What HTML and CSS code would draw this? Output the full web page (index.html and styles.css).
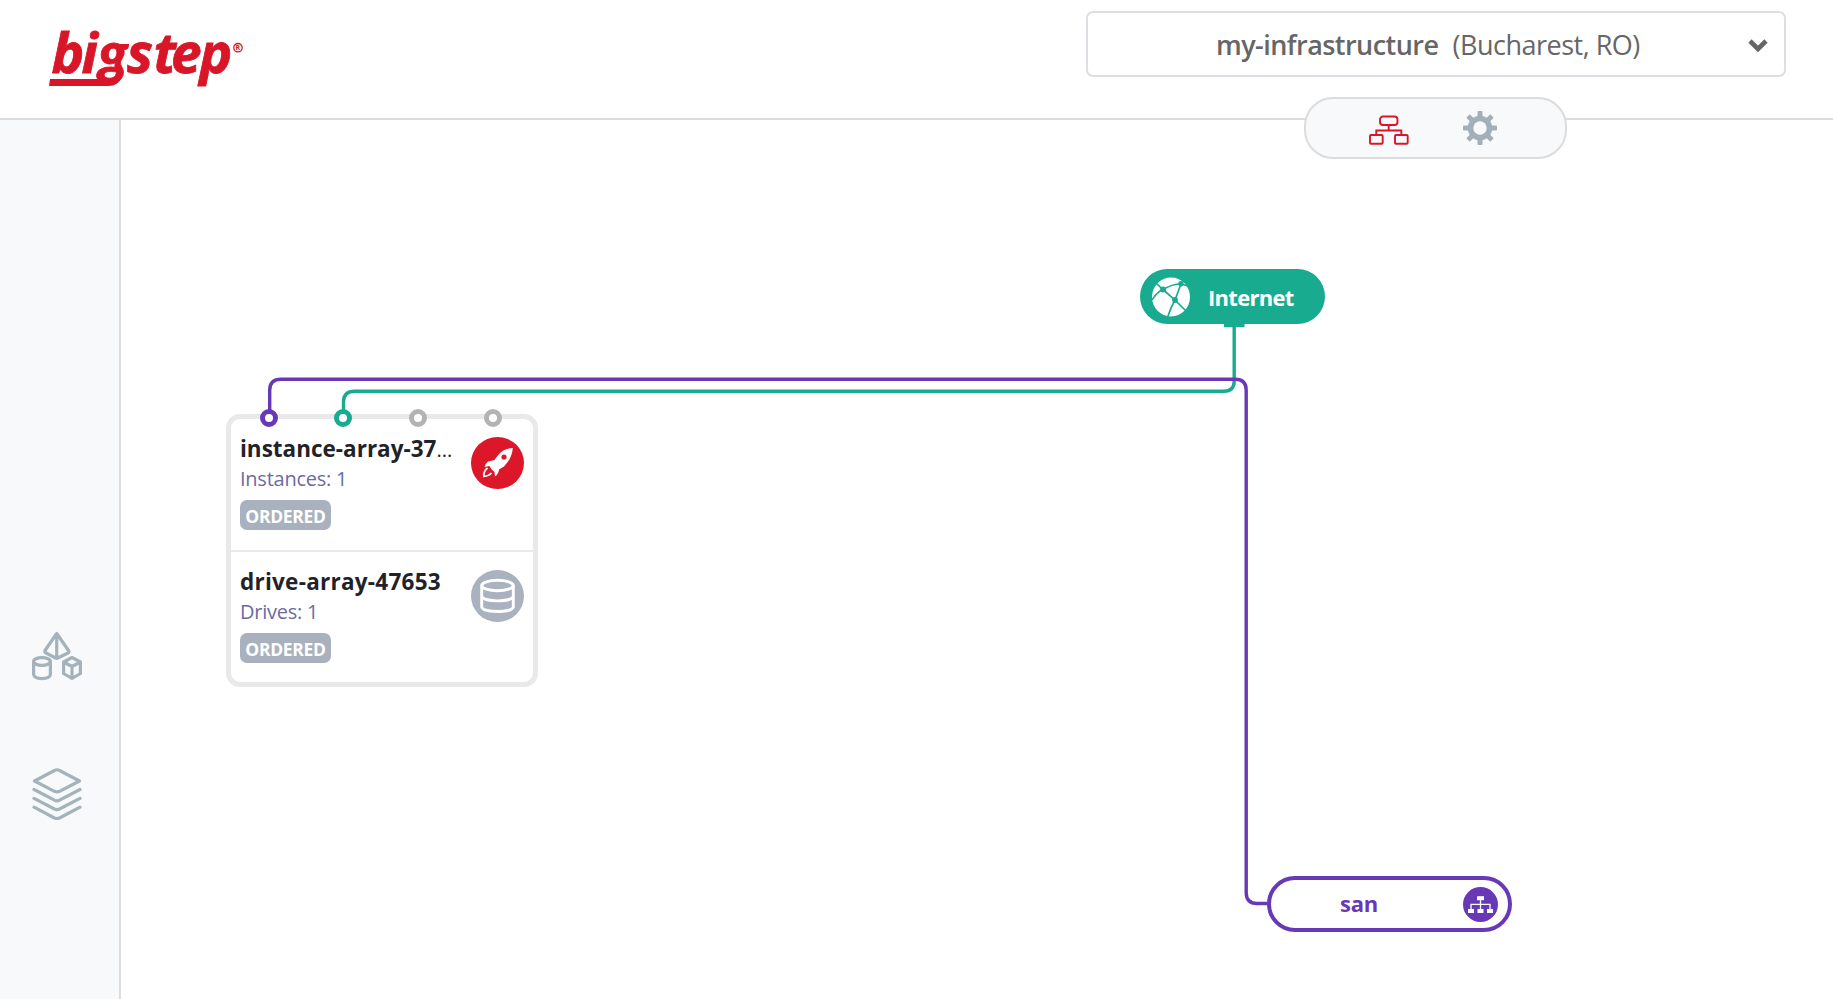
FILE: index.html
```html
<!DOCTYPE html>
<html lang="en">
<head>
<meta charset="utf-8">
<title>my-infrastructure</title>
<link rel="stylesheet" href="styles.css">
</head>
<body>
<div class="app">
  <header class="header">
    <svg class="logo" width="200" height="70" viewBox="0 0 200 70" role="img" aria-label="bigstep">
      <text class="logo-text" y="48" x="3.500 33.500 50.500 79 105.500 123 151.500">bi<tspan class="logo-g">g</tspan>step</text>
      <path d="M2 54H60Q67 54 69 48L75 47Q73 61 60 61H1Z" fill="#d91628"/>
      <circle cx="190" cy="22.700" r="4.200" fill="none" stroke="#d91628" stroke-width="1.300"/>
      <text class="logo-mark" x="187.600" y="25.300">R</text>
    </svg>
    <div class="select">
      <span class="select-name">my-infrastructure</span>
      <span class="select-place">(Bucharest, RO)</span>
      <svg class="chevron" width="20" height="14" viewBox="0 0 20 14"><path d="M2 3l8 8 8-8" fill="none" stroke="#666" stroke-width="4.600"/></svg>
    </div>
    <nav class="tabs">
      <svg width="40" height="30" viewBox="0 0 40 30" fill="none" stroke="#d91628" stroke-width="1.900">
        <rect x="11" y="1.500" width="17.500" height="8.500" rx="3"/>
        <rect x="1" y="20" width="12.700" height="8.700" rx="1"/>
        <rect x="26" y="20" width="12.700" height="8.700" rx="1"/>
        <path d="M19.700 10v5.500M7.300 20v-4.500h25V20"/>
      </svg>
      <svg class="gear" width="34" height="34" viewBox="-17 -17 34 34">
        <g fill="#a2b1b9">
          <rect x="-2.500" y="-17" width="5" height="34" rx=".8"/>
          <rect x="-2.500" y="-17" width="5" height="34" rx=".8" transform="rotate(45)"/>
          <rect x="-2.500" y="-17" width="5" height="34" rx=".8" transform="rotate(90)"/>
          <rect x="-2.500" y="-17" width="5" height="34" rx=".8" transform="rotate(135)"/>
          <circle r="12.300"/>
        </g>
        <circle r="6.700" fill="#f8f9fb"/>
      </svg>
    </nav>
  </header>
  <div class="body">
    <aside class="sidebar">
      <svg width="50" height="50" viewBox="0 0 50 50" fill="none" stroke="#a4b3bb" stroke-width="3.200" stroke-linejoin="round">
        <path d="M24.700 2.500L13 19.500Q12.500 21 14 22L24.700 27.500 36 22Q37.500 21 36.500 19.500ZM24.700 2.500V27.500"/>
        <ellipse cx="10" cy="30.500" rx="8.400" ry="3.900"/>
        <path d="M1.600 30.500V43.500C2.500 49 17.500 49 18.400 43.500V30.500"/>
        <path d="M40 26.500L48.400 31V42.500L40 47.500 31.600 42.500V31ZM31.600 31L40 35.500 48.400 31M40 35.500V47.500"/>
      </svg>
      <svg width="50" height="52" viewBox="0 0 50 52" fill="none" stroke="#a4b3bb" stroke-width="3.200" stroke-linejoin="round" stroke-linecap="round">
        <path d="M22.500 2.500Q25 1 27.500 2.500L47.500 13 27.500 23.300Q25 24.500 22.500 23.300L2.500 13Z"/>
        <path d="M2 21.500L22.500 32.200Q25 33.400 27.500 32.200L48 21.500M2 30.300L22.500 41Q25 42.200 27.500 41L48 30.300M2 39.200L22.500 50Q25 51.200 27.500 50L48 39.200"/>
      </svg>
    </aside>
    <main class="canvas">
      <svg class="links" width="1712" height="879" viewBox="121 120 1712 879" fill="none" stroke-width="3.400">
        <path d="M1234.200 324V381Q1234.200 391.200 1224 391.200H354.500Q343.500 391.200 343.500 402V412" stroke="#18ab8f"/>
        <path d="M269.700 412V390.200Q269.700 379.200 281 379.200H1235.200Q1246.200 379.200 1246.200 390.200V892.500Q1246.200 903.500 1257 903.500H1269" stroke="#6839b6"/>
        <path d="M1224 325.500h20.500" stroke="#18ab8f"/>
      </svg>
      <div class="node internet">
        <svg width="38" height="40" viewBox="0 0 38 40">
          <ellipse cx="19" cy="20" rx="19" ry="19.500" fill="#fff"/>
          <g stroke="#18ab8f" stroke-width="1.700" fill="none">
            <path d="M0 23Q5 15 11 12.500Q20 7 29 7L36 9M4 6L11 12.500 23 23 34 34M29 7L23 23Q19 30 16 39"/>
          </g>
          <g fill="#18ab8f"><circle cx="11" cy="12.500" r="2.900"/><circle cx="29" cy="6.800" r="2.700"/><circle cx="23" cy="23" r="2.900"/></g>
        </svg>
        <span class="internet-label">Internet</span>
      </div>
      <div class="card">
        <section class="item">
          <div class="info">
            <h2 class="title title-a"><span>instance-array-37</span><span class="dots">...</span></h2>
            <p class="count">Instances: 1</p>
            <span class="badge">ORDERED</span>
          </div>
          <svg class="icon" width="53" height="52" viewBox="0 0 53 52">
            <ellipse cx="26.500" cy="26" rx="26.500" ry="26" fill="#db1729"/>
            <path d="M41.800 11Q32 11 26 19.500L23.500 23 17 24.500Q14 27 13.500 30L18.500 29Q19.500 32 23.500 35L24 39.500Q27.500 37 28 32.500L33 29.500Q41 21.500 41.800 11Z" fill="#fff"/>
            <circle cx="33" cy="20" r="2.600" fill="#db1729"/>
            <path d="M16.500 31Q12.500 34 12.800 39.500Q18 39 20.500 36" fill="none" stroke="#fff" stroke-width="1.700"/>
          </svg>
        </section>
        <section class="item">
          <div class="info">
            <h2 class="title title-b">drive-array-47653</h2>
            <p class="count">Drives: 1</p>
            <span class="badge">ORDERED</span>
          </div>
          <svg class="icon" width="53" height="52" viewBox="0 0 53 52">
            <ellipse cx="26.500" cy="26" rx="26.500" ry="26" fill="#aab2bf"/>
            <g fill="none" stroke="#fff" stroke-width="2.900">
              <ellipse cx="26.500" cy="15.500" rx="15.800" ry="5.300"/>
              <path d="M10.700 15.500V37C12 43 41 43 42.300 37V15.500M10.700 26.500C13 32.300 40 32.300 42.300 26.500"/>
            </g>
          </svg>
        </section>
      </div>
      <i class="port port-san"></i>
      <i class="port port-wan"></i>
      <i class="port port-3"></i>
      <i class="port port-4"></i>
      <div class="node san">
        <span class="san-label">san</span>
        <svg width="35" height="35" viewBox="0 0 35 35">
          <circle cx="17.500" cy="17.500" r="17.500" fill="#6839b6"/>
          <g fill="#fff"><rect x="14" y="9.200" width="7" height="4"/><rect x="5" y="22" width="6" height="4"/><rect x="14.500" y="22" width="6" height="4"/><rect x="24" y="22" width="6" height="4"/></g>
          <path d="M17.500 13v9M8 22v-4.700h19V22" fill="none" stroke="#fff" stroke-width="1.300"/>
        </svg>
      </div>
    </main>
  </div>
</div>
</body>
</html>
```
FILE: styles.css
```css
* { box-sizing: border-box; }
body {
  margin: 0;
  background: #fff;
  font-family: "Open Sans", "Noto Sans", sans-serif;
  color: #1f2329;
}
.app {
  display: flex;
  flex-direction: column;
  height: 999px;
  overflow: hidden;
}
.header {
  position: relative;
  display: flex;
  justify-content: space-between;
  align-items: flex-start;
  height: 120px;
  flex: none;
  padding: 11px 47px 0 48px;
  border-bottom: 2px solid #dcdcdc;
}
.logo { margin-top: 14px; overflow: visible; }
.logo-text {
  font-size: 55px;
  font-weight: 700;
  font-style: italic;
  fill: #d91628;
  stroke: #d91628;
  stroke-width: 0.8px;
}
.logo-g { font-family: Lato, sans-serif; font-size: 58px; font-weight: 900; }
.logo-mark { font-size: 7px; font-weight: 700; fill: #d91628; }
.select {
  display: flex;
  align-items: center;
  width: 700px;
  height: 66px;
  padding: 2px 16px 0 128px;
  border: 2px solid #dddde3;
  border-radius: 7px;
  color: #666;
  font-size: 27px;
  line-height: 38px;
  white-space: nowrap;
}
.select-name { width: 236.5px; font-weight: 600; letter-spacing: -0.55px; }
.select-place { letter-spacing: -0.5px; }
.chevron { margin-left: auto; }
.tabs {
  position: absolute;
  left: 1304px;
  top: 97px;
  z-index: 2;
  display: flex;
  align-items: center;
  width: 263px;
  height: 62px;
  padding: 0 0 0 63px;
  gap: 54px;
  border: 2px solid #dcdcdc;
  border-radius: 29px;
  background: #f8f9fb;
}
.tabs svg:first-child { margin-top: 4px; }
.body { display: flex; flex: 1; min-height: 0; }
.sidebar {
  display: flex;
  flex-direction: column;
  gap: 87px;
  width: 121px;
  flex: none;
  padding: 511px 0 0 32px;
  border-right: 2px solid #dcdcdc;
  background: #f8f9fb;
}
.canvas { position: relative; flex: 1; }
.links { position: absolute; left: 0; top: 0; }
.node {
  position: absolute;
  display: flex;
  align-items: center;
  font-size: 22px;
  font-weight: 700;
  line-height: 30px;
}
.internet {
  left: 1019px;
  top: 149px;
  width: 185px;
  height: 55px;
  padding-left: 12px;
  gap: 18px;
  border-radius: 27.5px;
  background: #18ab8f;
  color: #fff;
}
.internet-label { letter-spacing: -0.7px; }
.san {
  left: 1146px;
  top: 756px;
  width: 245px;
  height: 56px;
  padding: 0 10px 0 69px;
  justify-content: space-between;
  border: 4px solid #6839b6;
  border-radius: 28px;
  background: #fff;
  color: #6839b6;
}
.san-label { padding-bottom: 2px; letter-spacing: -0.2px; }
.card {
  position: absolute;
  left: 105px;
  top: 294px;
  width: 312px;
  height: 273px;
  border: 5px solid #e9e9e9;
  border-radius: 14px;
  background: #fff;
}
.item {
  display: flex;
  justify-content: space-between;
  align-items: flex-start;
  height: 131px;
  padding: 15px 9px 0;
}
.item + .item { height: 132px; border-top: 2px solid #e9e9e9; }
.icon { margin-top: 3px; }
.info { white-space: nowrap; }
.title {
  height: 30px;
  margin: 0;
  font-size: 22.5px;
  font-weight: 700;
  line-height: 30px;
}
.title-a { letter-spacing: 0; }
.title-b { letter-spacing: 0.25px; }
.dots { font-weight: 400; font-size: 20px; line-height: 20px; }
.count {
  margin: 0 0 6px;
  color: #6b6b9f;
  font-size: 20px;
  line-height: 30px;
  letter-spacing: -0.25px;
}
.badge {
  display: flex;
  justify-content: center;
  width: 91px;
  height: 30px;
  padding-top: 1px;
  border-radius: 7px;
  background: #a9b1be;
  color: #fff;
  font-size: 17.5px;
  font-weight: 700;
  line-height: 30px;
  letter-spacing: -0.3px;
}
.port {
  position: absolute;
  top: 289px;
  width: 18px;
  height: 18px;
  border: 5px solid #b3b3b3;
  border-radius: 50%;
  background: #fff;
}
.port-san { left: 139px; border-color: #6839b6; }
.port-wan { left: 213px; border-color: #18ab8f; }
.port-3 { left: 288px; }
.port-4 { left: 363px; }
```
